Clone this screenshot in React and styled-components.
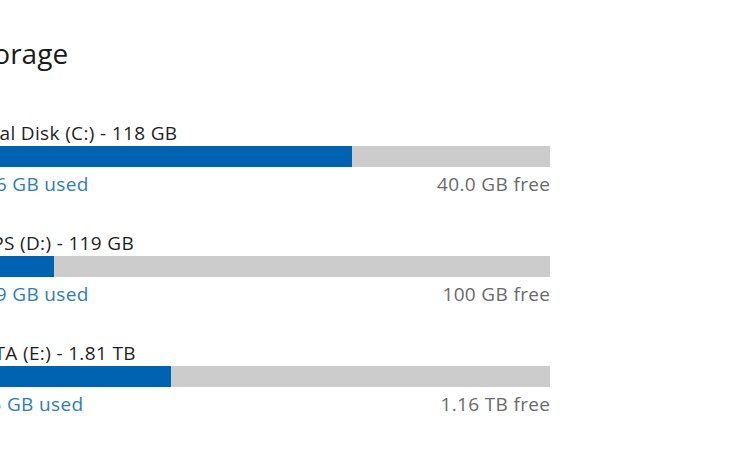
import React from "react";
import styled, { createGlobalStyle } from "styled-components";

const Global = createGlobalStyle`
  html, body { margin: 0; padding: 0; background: #ffffff; overflow: hidden; }
  body { font-family: "Open Sans", "Noto Sans", "Liberation Sans", sans-serif; }
`;

const Page = styled.div`
  width: 750px;
  height: 450px;
  overflow: hidden;
  background: #ffffff;
`;

const Panel = styled.section`
  margin-left: -32px;
  width: 582px;
  padding-top: 33px;
  display: flex;
  flex-direction: column;
`;

const Title = styled.h1`
  margin: 0 0 48px 0;
  font-size: 28px;
  font-weight: 400;
  line-height: 40px;
  color: #1a1a1a;
`;

const Drive = styled.div`
  display: flex;
  flex-direction: column;
  margin-bottom: 35px;
`;

const Label = styled.div`
  font-size: 19px;
  line-height: 24px;
  letter-spacing: 0.35px;
  color: #1f1f1f;
  margin-bottom: 1px;
`;

const Track = styled.div`
  height: 21px;
  background: #cccccc;
  display: flex;
`;

const Fill = styled.div`
  height: 100%;
  background: #0063b1;
`;

const Stats = styled.div`
  display: flex;
  justify-content: space-between;
  font-size: 19px;
  line-height: 24px;
  letter-spacing: 0.35px;
  margin-top: 5px;
`;

const Used = styled.span`
  color: #2f7db7;
`;

const Free = styled.span`
  color: #6a6a6a;
  margin-right: -0.35px;
`;

const drives = [
  { label: "Local Disk (C:) - 118 GB", used: "77.6 GB used", free: "40.0 GB free", pct: 66.0 },
  { label: "APPS (D:) - 119 GB", used: "18.9 GB used", free: "100 GB free", pct: 14.8 },
  { label: "DATA (E:) - 1.81 TB", used: "665 GB used", free: "1.16 TB free", pct: 34.9 },
];

export default function App() {
  return (
    <Page>
      <Global />
      <Panel>
        <Title>Storage</Title>
        {drives.map((d) => (
          <Drive key={d.label}>
            <Label>{d.label}</Label>
            <Track>
              <Fill style={{ width: `${d.pct}%` }} />
            </Track>
            <Stats>
              <Used>{d.used}</Used>
              <Free>{d.free}</Free>
            </Stats>
          </Drive>
        ))}
      </Panel>
    </Page>
  );
}
